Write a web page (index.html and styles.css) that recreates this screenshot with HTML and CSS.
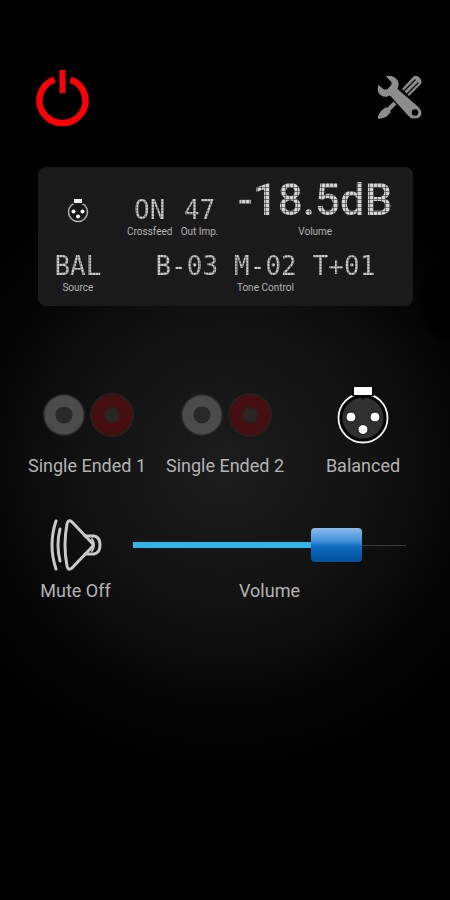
FILE: index.html
```html
<!DOCTYPE html>
<html lang="en">
<head>
<meta charset="utf-8">
<meta name="viewport" content="width=device-width, initial-scale=1">
<title>Amplifier Remote</title>
<link rel="stylesheet" href="styles.css">
</head>
<body>
<svg class="defs" aria-hidden="true">
  <symbol id="rca" viewBox="0 0 96 60">
    <circle cx="25" cy="29" r="21" fill="#292929"/>
    <circle cx="25" cy="29" r="14" fill="none" stroke="#4b4b4b" stroke-width="11"/>
    <circle cx="25" cy="29" r="8" fill="#292929"/>
    <circle cx="73" cy="29" r="22" fill="#29201e"/>
    <circle cx="73" cy="29" r="14" fill="none" stroke="#450f12" stroke-width="12"/>
    <circle cx="73" cy="29" r="7" fill="#29251f"/>
  </symbol>
</svg>
<header class="toolbar">
  <button class="icon-button" type="button" aria-label="Power">
    <svg width="54" height="58" viewBox="0 0 54 58">
      <path d="M18.500 10.500A23 22.500 0 1 0 34.500 10.500" fill="none" stroke="#fb0007" stroke-width="6.500"/>
      <path d="M26.500 1V24" stroke="#fb0007" stroke-width="6"/>
    </svg>
  </button>
  <button class="icon-button" type="button" aria-label="Settings">
    <svg width="48" height="48" viewBox="0 0 48 48">
      <path d="M19 29L10 38" stroke="#8d8d8d" stroke-width="4"/>
      <path d="M10 33L15 38L10 43L3 45Q1 44 2 42L5 37Z" fill="#8d8d8d"/>
      <path d="M26 15L37 3Q40 0 44 4Q47 8 44 11L33 22Z" fill="#8d8d8d"/>
      <path d="M28 17L39 6M31 20L42 9" stroke="#111" stroke-width="1.500" stroke-linecap="round"/>
      <path d="M9 2L15 8V11L11 15H8L2 10Q-1 20 7 23Q11 24 14 22L32 42Q35 46 40 45Q46 44 46 38Q45 35 42 32L22 15Q25 8 20 4Q16 0 9 2Z" fill="#8d8d8d" stroke="#000" stroke-width="1"/>
      <circle cx="39" cy="38.500" r="3.200" fill="#000"/>
    </svg>
  </button>
</header>

<main>
  <section class="display" aria-label="Status display">
    <div class="cell source-icon">
      <svg width="24" height="26" viewBox="0 0 24 26">
        <circle cx="12" cy="14" r="9.500" fill="#181818" stroke="#b0b0b0" stroke-width="1.500"/>
        <rect x="7" y="0" width="10" height="6" fill="#1a1a1a"/>
        <rect x="8" y="1" width="8" height="4" fill="#eee"/>
        <circle cx="7.500" cy="13.500" r="2" fill="#fff"/>
        <circle cx="16.500" cy="13.500" r="2" fill="#fff"/>
        <circle cx="12" cy="18.500" r="2" fill="#fff"/>
      </svg>
    </div>
    <div class="cell"><span class="lcd">ON</span><span class="caption">Crossfeed</span></div>
    <div class="cell"><span class="lcd">47</span><span class="caption">Out Imp.</span></div>
    <div class="cell"><span class="lcd lcd-large">-18.5dB</span><span class="caption">Volume</span></div>
    <div class="cell"><span class="lcd">BAL</span><span class="caption">Source</span></div>
    <div class="cell tone">
      <div class="tone-values"><span class="lcd">B-03</span><span class="lcd">M-02</span><span class="lcd">T+01</span></div>
      <span class="caption">Tone Control</span>
    </div>
  </section>

  <section class="sources" aria-label="Source">
    <button class="control" type="button">
      <svg width="96" height="60"><use href="#rca"/></svg>
      <span>Single Ended 1</span>
    </button>
    <button class="control" type="button">
      <svg width="96" height="60"><use href="#rca"/></svg>
      <span>Single Ended 2</span>
    </button>
    <button class="control" type="button" aria-pressed="true">
      <svg width="60" height="60" viewBox="0 0 60 60">
        <circle cx="30" cy="32" r="24.500" fill="#050505" stroke="#f4f4f4" stroke-width="1.800"/>
        <circle cx="30" cy="32" r="20.500" fill="#303030"/>
        <rect x="19" y="0" width="22" height="10" fill="#080808"/>
        <path d="M27 11H33L30 14Z" fill="#080808"/>
        <rect x="21" y="1" width="18" height="8" fill="#fff"/>
        <g fill="#fff" stroke="#111" stroke-width="1">
          <circle cx="18" cy="31" r="5"/>
          <circle cx="42" cy="31" r="5"/>
          <circle cx="30" cy="43.500" r="5"/>
        </g>
      </svg>
      <span>Balanced</span>
    </button>
  </section>

  <section class="volume-row">
    <button class="control" type="button">
      <svg width="52" height="52" viewBox="0 0 52 52" fill="none" stroke="#c9c9c9" stroke-width="3" stroke-linecap="round" stroke-linejoin="round">
        <path d="M6 2Q-2 26 6 50"/>
        <path d="M10 10Q6 26 10 42"/>
        <path d="M22 3Q18 0 17 5Q13 26 17 47Q18 52 22 49L42 28Q44 26 42 24Z"/>
        <path d="M35 17H44Q50 18 50 26Q50 34 44 35H35"/>
        <path d="M42 20Q46 26 42 32" stroke-width="2"/>
      </svg>
      <span>Mute Off</span>
    </button>
    <div class="control">
      <input class="slider" id="volume" type="range" min="0" max="100" value="80">
      <label for="volume">Volume</label>
    </div>
  </section>
</main>
</body>
</html>
```
FILE: styles.css
```css
* {
  box-sizing: border-box;
}

body {
  margin: 0;
  min-height: 100vh;
  color: #b4b4b4;
  font-family: Roboto, "Liberation Sans", sans-serif;
  font-size: 18px;
  background:
    radial-gradient(ellipse 34px 46px at 100% 300px, #000 80%, transparent 100%),
    radial-gradient(circle at 50% 465px, #1c1c1c 0, #131313 130px, #060606 235px, #000 310px),
    #000;
}

.defs {
  display: none;
}

button {
  padding: 0;
  border: 0;
  background: none;
  color: inherit;
  font: inherit;
  cursor: pointer;
}

svg {
  display: block;
}

.toolbar {
  display: flex;
  justify-content: space-between;
  align-items: center;
  padding: 69px 26px 40px 36px;
}

/* Status display */
.display {
  display: grid;
  grid-template-columns: 80fr 64fr 36fr 196fr;
  align-items: end;
  row-gap: 14px;
  margin: 0 37px 0 38px;
  padding: 9px 0 12px;
  border-radius: 8px;
  background: #1a1a1a;
}

.cell {
  display: flex;
  flex-direction: column;
  align-items: center;
  gap: 2px;
  min-width: 0;
  white-space: nowrap;
}

.source-icon {
  padding-bottom: 14px;
}

.tone {
  grid-column: 2 / -1;
}

.tone-values {
  display: flex;
  gap: 16px;
}

/* The dark lines split the glyphs into the dots of an LCD matrix. */
.lcd {
  font-family: "DejaVu Sans Mono", monospace;
  font-size: 26px;
  line-height: 28px;
  color: transparent;
  background:
    linear-gradient(transparent 2px, rgb(26 26 26 / 30%) 2px) 0 0 / 3px 3px,
    linear-gradient(90deg, transparent 2px, rgb(26 26 26 / 30%) 2px) 0 0 / 3px 3px,
    #cacaca;
  -webkit-background-clip: text;
  background-clip: text;
}

.lcd-large {
  font-family: Roboto, sans-serif;
  font-size: 44px;
  font-weight: 500;
  line-height: 48px;
  background:
    linear-gradient(transparent 3px, rgb(26 26 26 / 50%) 3px) 0 0 / 4px 4px,
    linear-gradient(90deg, transparent 3px, rgb(26 26 26 / 50%) 3px) 0 0 / 4px 4px,
    #d4d4d4;
  -webkit-background-clip: text;
  background-clip: text;
}

.caption {
  font-size: 10px;
  line-height: 12px;
}

/* Source buttons and volume */
.sources {
  display: grid;
  grid-template-columns: repeat(3, 1fr);
  margin: 80px 18px 43px;
}

.control {
  display: flex;
  flex-direction: column;
  align-items: center;
  gap: 10px;
  line-height: 20px;
}

.volume-row {
  display: grid;
  grid-template-columns: 115px 1fr;
  margin: 0 44px 0 18px;
}

.slider {
  -webkit-appearance: none;
  appearance: none;
  width: 100%;
  height: 52px;
  margin: 0;
  background:
    linear-gradient(#34b4e6, #34b4e6) 0 50% / 70% 6px no-repeat,
    linear-gradient(#3c3c3c, #3c3c3c) 0 50% / 100% 1px no-repeat;
}

.slider::-webkit-slider-thumb {
  -webkit-appearance: none;
  width: 51px;
  height: 34px;
  border: 0;
  border-radius: 4px;
  background: linear-gradient(#8bbcec, #3f8ed8 40%, #0c69bd 55%, #04519c);
}
```
